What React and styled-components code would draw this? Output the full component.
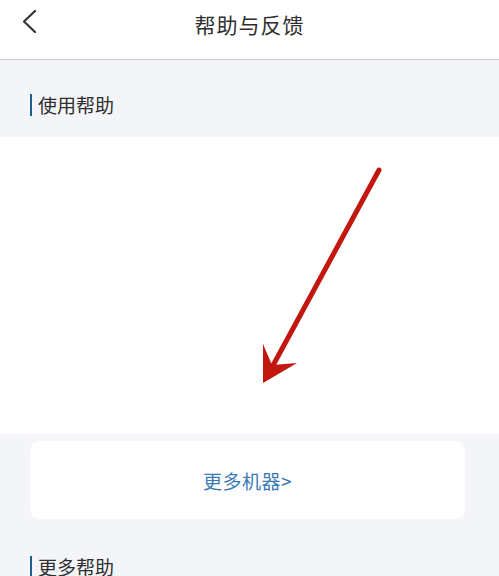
import React from 'react'
import styled, { createGlobalStyle } from 'styled-components'

const GlobalStyle = createGlobalStyle`
  html, body {
    margin: 0;
    padding: 0;
    background: #f4f5f9;
    font-family: "Noto Sans CJK SC", "Noto Sans", sans-serif;
  }
`

const Page = styled.div`
  width: 499px;
  height: 576px;
  overflow: hidden;
  background: #f4f5f9;
`

const Header = styled.header`
  position: relative;
  height: 59px;
  background: #fff;
  border-bottom: 1px solid #c9c9cc;
  display: flex;
  align-items: center;
  justify-content: center;
`

const BackButton = styled.button`
  position: absolute;
  left: 14px;
  top: 6px;
  width: 32px;
  height: 32px;
  padding: 0;
  border: none;
  background: none;
  display: flex;
  align-items: center;
  justify-content: center;
`

const Title = styled.h1`
  margin: 0 0 12px;
  font-size: 21px;
  font-weight: 400;
  color: #2e2e2e;
  letter-spacing: 1px;
`

const SectionTitle = styled.div`
  display: flex;
  align-items: center;
  height: 22px;
  margin: ${p => p.$top}px 0 0 30px;
  font-size: 19px;
  color: #2e2e2e;
  line-height: 22px;

  &::before {
    content: '';
    width: 2px;
    height: 22px;
    background: #1f5f8c;
    margin-right: 6px;
  }
`

const Panel = styled.section`
  position: relative;
  margin-top: 21px;
  height: 297px;
  background: #fff;
`

const Pointer = styled.svg`
  position: absolute;
  left: 0;
  top: 0;
`

const MoreCard = styled.div`
  margin: 7px 34px 0 30px;
  height: 78px;
  border-radius: 10px;
  background: #fff;
  display: flex;
  align-items: center;
  justify-content: center;
  font-size: 19px;
  letter-spacing: 0.5px;
  color: #3b7bb5;
`

const BackIcon = () => (
  <svg width="16" height="26" viewBox="0 0 16 26">
    <path d="M13 2 L2 12.5 L13 23" fill="none" stroke="#333" strokeWidth="2.2" strokeLinecap="round" strokeLinejoin="round" />
  </svg>
)

const App = () => (
  <>
    <GlobalStyle />
    <Page>
      <Header>
        <BackButton>
          <BackIcon />
        </BackButton>
        <Title>帮助与反馈</Title>
      </Header>
      <SectionTitle $top={34}>使用帮助</SectionTitle>
      <Panel>
        <Pointer width="499" height="297" viewBox="0 137 499 297">
          <line x1="379" y1="170" x2="270" y2="371" stroke="#c1170f" strokeWidth="5" strokeLinecap="round" />
          <path d="M263 383 L263 344 L272 365 L297 363 Z" fill="#c1170f" />
        </Pointer>
      </Panel>
      <MoreCard>更多机器&gt;</MoreCard>
      <SectionTitle $top={37}>更多帮助</SectionTitle>
    </Page>
  </>
)

export default App
